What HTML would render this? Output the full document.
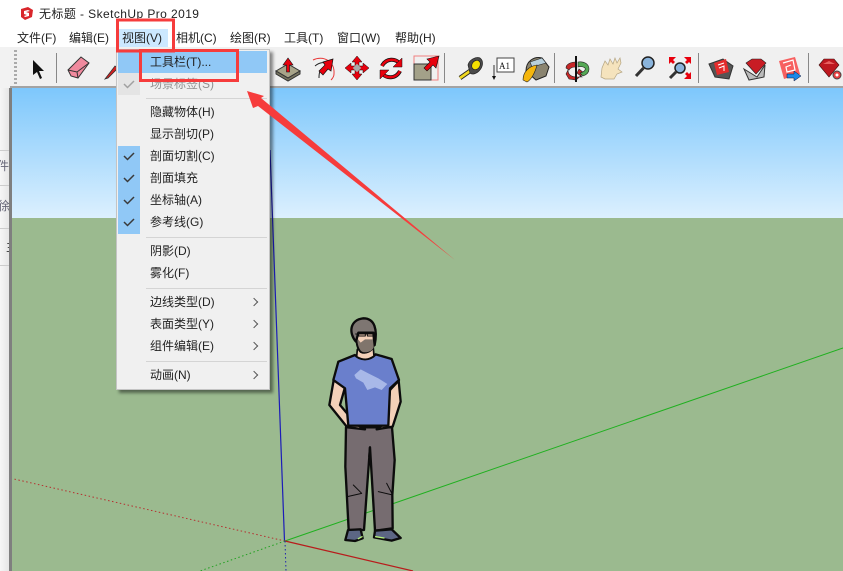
<!DOCTYPE html>
<html><head><meta charset="utf-8"><style>
*{margin:0;padding:0;box-sizing:border-box}
html,body{width:843px;height:571px;overflow:hidden;background:#fff}
body{position:relative;font-family:"Liberation Sans","Noto Sans CJK SC",sans-serif;font-size:12px;color:#222}
.a{position:absolute}
.t{position:absolute;white-space:nowrap;line-height:16px;height:16px}
.m{position:absolute;left:150px;white-space:nowrap;line-height:16px;color:#222}
.s{position:absolute;left:146px;width:121px;height:1px;background:#d4d4d4}
.ar{position:absolute;left:251px;width:6px;height:6px;border-top:1px solid #555;border-right:1px solid #555;transform:rotate(45deg)}
</style></head><body>
<div class="a" style="left:0;top:0;width:843px;height:47px;background:#fff"></div>
<svg class="a" style="left:19px;top:6px" width="15" height="15" viewBox="0 0 15 15"><path d="M2 3 9 1l5 3-1 7-7 3-4-3z" fill="#d9262b"/><path d="M5 5l4-1 2 1-4 1 3 1v3l-4 1-1-1 3-1-3-1z" fill="#fff"/></svg>
<div class="t" style="left:39px;top:6px;color:#222;letter-spacing:.42px">无标题 - SketchUp Pro 2019</div>
<div class="a" style="left:116px;top:29px;width:52px;height:19px;background:#cce8ff"></div>
<div class="t" style="left:17px;top:30px">文件(F)</div>
<div class="t" style="left:69px;top:30px">编辑(E)</div>
<div class="t" style="left:122px;top:30px">视图(V)</div>
<div class="t" style="left:176px;top:30px">相机(C)</div>
<div class="t" style="left:230px;top:30px">绘图(R)</div>
<div class="t" style="left:284px;top:30px">工具(T)</div>
<div class="t" style="left:337px;top:30px">窗口(W)</div>
<div class="t" style="left:395px;top:30px">帮助(H)</div>

<div class="a" style="left:0;top:47px;width:843px;height:39px;background:#f0f0f0"></div>
<div class="a" style="left:0;top:86px;width:843px;height:2px;background:#a3a3a3"></div>
<div class="a" style="left:0;top:47px;width:10px;height:524px;background:#f2f2f2"></div>
<div class="a" style="left:14px;top:50px;width:3px;height:34px;background:repeating-linear-gradient(#aaa 0 2px,transparent 2px 4px)"></div>
<div class="a" style="left:56px;top:53px;width:1px;height:30px;background:#888"></div>
<div class="a" style="left:444px;top:53px;width:1px;height:30px;background:#888"></div>
<div class="a" style="left:554px;top:53px;width:1px;height:30px;background:#888"></div>
<div class="a" style="left:698px;top:53px;width:1px;height:30px;background:#888"></div>
<div class="a" style="left:808px;top:53px;width:1px;height:30px;background:#888"></div>

<!-- left strip -->
<div class="a" style="left:0;top:88px;width:10px;height:483px;background:linear-gradient(90deg,#f6f6f6,#e4e4e4)"></div>
<div class="a" style="left:0;top:150px;width:10px;height:1px;background:#ccc"></div>
<div class="a" style="left:0;top:185px;width:10px;height:1px;background:#ccc"></div>
<div class="a" style="left:0;top:228px;width:10px;height:1px;background:#ccc"></div>
<div class="a" style="left:0;top:265px;width:10px;height:1px;background:#ccc"></div>
<div class="a" style="left:0;top:150px;width:10px;height:115px;overflow:hidden">
<div class="t" style="left:-3px;top:8px;color:#667">件</div>
<div class="t" style="left:-2px;top:48px;color:#667">徐</div>
<div class="t" style="left:6px;top:89px;color:#333">主</div></div>
<div class="a" style="left:9px;top:88px;width:3px;height:483px;background:#7f7f7f"></div>

<!-- viewport -->
<div class="a" style="left:12px;top:88px;width:831px;height:130px;background:linear-gradient(#7dc7fc,#dcf0fe)"></div>
<div class="a" style="left:12px;top:218px;width:831px;height:353px;background:#9bba8f"></div>
<svg class="a" style="left:0;top:0" width="843" height="571" viewBox="0 0 843 571">
<line x1="285" y1="541" x2="843" y2="348" stroke="#1fb01f" stroke-width="1"/>
<line x1="285" y1="541" x2="413" y2="571" stroke="#b81c1c" stroke-width="1.2"/>
<line x1="270" y1="150" x2="284.500" y2="541" stroke="#1c1cb8" stroke-width="1.200"/>
<line x1="285" y1="541" x2="14" y2="479" stroke="#b53030" stroke-width="1" stroke-dasharray="1.500 2.500"/>
<line x1="285" y1="541" x2="200" y2="571" stroke="#20a020" stroke-width="1" stroke-dasharray="1.500 2.500"/>
<line x1="285" y1="541" x2="286" y2="571" stroke="#2020b0" stroke-width="1" stroke-dasharray="1.500 2.500"/>
<g transform="translate(310 310) scale(.33333)" stroke="#0c0c0c" stroke-width="7" stroke-linejoin="round" stroke-linecap="round">
<path d="M108 352H246L254 450 247 555 248 655 195 662 180 412 162 660 116 660 106 470Z" fill="#766c70"/>
<path d="M72 205 58 285 112 352 165 358 138 342 90 285 105 232ZM266 212 272 275 248 350 200 358 230 335 240 240Z" fill="#f3d0b8"/>
<path d="M135 135C150 152 180 152 197 133L245 147 267 210 240 235 235 347H115L105 235 70 210 85 155Z" fill="#6a7fcc"/>
<path d="M133 195 152 178 175 190 205 205 232 222 215 240 195 232 172 240 160 218 138 205Z" fill="#a8b8e8" stroke="none"/>
<path d="M142 118 140 140C160 152 175 150 192 138L190 115Z" fill="#f3d0b8" stroke-width="5"/>
<path d="M140 68H192V100C190 125 165 132 152 125 142 115 138 95 140 68Z" fill="#f3d0b8"/>
<path d="M142 85 152 98 165 88 190 88 191 112C185 128 160 130 153 123 145 112 142 100 142 85Z" fill="#80756c" stroke="none"/>
<path d="M138 95C116 70 118 30 160 25 195 25 203 60 194 105L190 68 145 68Z" fill="#7e7672"/>
<path d="M137 72H192M146 70h20v8h-20zM172 70h20v8h-20z" fill="none" stroke-width="3"/>
<path d="M114 660 152 658 158 685 135 693 106 690ZM195 662 245 658 272 684 245 692 192 682Z" fill="#5c6684"/>
<path d="M112 560 155 550 130 525M205 545 248 555 230 520M178 412 176 440" fill="none" stroke-width="3"/>
<path d="M197 680 222 684M145 686 156 680" stroke="#b5f07a" stroke-width="4" fill="none"/>
</g>

<!-- toolbar icons -->
<path d="M33 60 33 75 37 72 40 79 42 78 39 71 44 71Z" fill="#111"/>
<g transform="translate(68 57)"><path d="M0 13 13 0 21 6 10 21 3 19Z" fill="#f08a9e" stroke="#333"/><path d="M0 13 9 15 21 6M9 15 10 21" stroke="#333" fill="none"/></g>
<path d="M105 79 115 66 118 68 108 78Z" fill="#d42020" stroke="#333" stroke-width=".8"/>
<g transform="translate(276 56)"><path d="M0 15 12 8 24 15 12 22Z" fill="#a8a489" stroke="#333"/><path d="M0 15V18L12 25 24 18V15L12 22Z" fill="#77745f" stroke="#333"/><path d="M12 2 7 9H10.500V16H13.500V9H17Z" fill="#e8000d" stroke="#111" stroke-width=".6"/></g>
<g transform="translate(311 56)"><path d="M2 4C12-1 24 5 23 18 23 20 22 22 20 24" stroke="#e83838" fill="none"/><path d="M4 10C9 6 13 6 15 8M8 22C8 16 9 14 12 13" stroke="#222" fill="none"/><path d="M22 3 12 6 14 9 8 15 12 19 17 13 20 15Z" fill="#e8000d" stroke="#111" stroke-width=".7"/></g>
<g transform="translate(345 56)"><path d="M12 0 17 6H14V10H10V6H7ZM12 24 7 18H10V14H14V18H17ZM0 12 6 7V10H10V14H6V17ZM24 12 18 17V14H14V10H18V7Z" fill="#e8000d" stroke="#111" stroke-width=".5"/><rect x="9" y="9" width="6" height="6" fill="#aaa" transform="rotate(45 12 12)"/></g>
<g transform="translate(379 56)" fill="none"><path d="M3 10C7 2 17 2 21 8" stroke="#111" stroke-width="4"/><path d="M3 10C7 2 17 2 21 8" stroke="#e8000d" stroke-width="2.500"/><path d="M23 2V11H14Z" fill="#e8000d" stroke="#111" stroke-width=".5"/><path d="M21 15C17 23 7 23 3 17" stroke="#111" stroke-width="4"/><path d="M21 15C17 23 7 23 3 17" stroke="#e8000d" stroke-width="2.500"/><path d="M1 23V14H10Z" fill="#e8000d" stroke="#111" stroke-width=".5"/></g>
<g transform="translate(414 56)"><rect x="0" y="0" width="24" height="24" fill="none" stroke="#f08080"/><rect x="0" y="8" width="17" height="16" fill="#a3a189" stroke="#333"/><path d="M25 0 13 3 16 6 10 12 13 15 19 9 22 12Z" fill="#e8000d" stroke="#111" stroke-width=".6"/></g>
<g transform="translate(457 56)"><path d="M3 22 13 15" stroke="#222" stroke-width="4.500"/><path d="M3 22 13 15" stroke="#f0d820" stroke-width="2.800"/><path d="M11 9C12 4 19 0 23 2 27 5 26 11 22 15 19 18 15 19 13 17Z" fill="#4a4a4a" stroke="#222" stroke-width=".7"/><ellipse cx="19" cy="9" rx="4" ry="5" transform="rotate(35 19 9)" fill="#f4e000" stroke="#222" stroke-width=".7"/></g>
<g transform="translate(491 56)"><rect x="6" y="2" width="17" height="14" fill="#fff" stroke="#444"/><text x="8" y="13" font-family="Liberation Serif,serif" font-size="9" fill="#111">A1</text><path d="M3 9V22" stroke="#333"/><path d="M1 20H5L3 24Z" fill="#111"/></g>
<g transform="translate(522 55)"><path d="M4 16C4 6 12 1 20 3L27 12 24 21 14 25Z" fill="#8a8470" stroke="#222"/><path d="M8 7 20 3 24 8 10 12Z" fill="#b8d0dc" stroke="#222" stroke-width=".6"/><path d="M1 25C1 17 7 11 15 10 13 18 9 25 5 27Z" fill="#f5b60d" stroke="#222" stroke-width=".6"/></g>
<g transform="translate(565 55)"><path d="M1 13C1 9 6 7 11 7V12C7 12 5 13 4 15Z" fill="#c62828" stroke="#222" stroke-width=".6"/><path d="M3 15C3 20 7 22 12 22H17L12 18 14 14 19 18 11 25 4 24 1 19Z" fill="#c62828" stroke="#222" stroke-width=".6"/><path d="M13 7C19 6 24 9 24 14 24 18 21 20 18 21L15 18C19 17 21 15 20 13 19 12 16 11 13 12Z" fill="#55a855" stroke="#222" stroke-width=".6"/><path d="M11 1V27" stroke="#111" stroke-width="2"/></g>
<path d="M601 77 602 68 605 61 608 65 610 59 613 64 615 58 617 63 620 58 621 63 618 69 622 72 617 74 614 79 605 79Z" fill="#f5e3bd" stroke="#b5a582" stroke-width=".7"/>
<g fill="none"><circle cx="648" cy="63" r="6" fill="#8ab4dc" stroke="#222" stroke-width="1.500"/><path d="M643.500 68 636 76" stroke="#333" stroke-width="3"/>
<circle cx="680" cy="68" r="5" fill="#8ab4dc" stroke="#222" stroke-width="1.500"/><path d="M676 72 670 78" stroke="#333" stroke-width="3"/></g>
<path d="M669 57 676 57 673 60 675 62 673 64 671 62 669 64ZM691 57 684 57 687 60 685 62 687 64 689 62 691 64ZM691 79 684 79 687 76 685 74 687 72 689 74 691 72Z" fill="#e8000d"/>
<g transform="translate(709 56)"><path d="M0 8 14 3 24 10 20 23 6 21Z" fill="#555" stroke="#333"/><path d="M5 7 17 3 20 16 8 19Z" fill="#e42c2c"/><path d="M9 9 15 7M10 12 15 10V15" stroke="#fff" fill="none"/></g>
<g transform="translate(743 57)"><path d="M1 12 14 20 22 8 21 20 6 23Z" fill="#bbb" stroke="#333"/><path d="M3 6 9 2H18L23 6 13 17Z" fill="#c81c24" stroke="#222" stroke-width=".6"/></g>
<g transform="translate(778 57)"><path d="M1 4 17 0 22 17 6 22Z" fill="#f76060"/><path d="M5 6 15 3 17 13 9 15 8 10 13 8" stroke="#fff" fill="none" stroke-width="1.200"/><path d="M9 17H16V14L23 19 16 24V21H9Z" fill="#1a88e8" stroke="#113" stroke-width=".5"/></g>
<g transform="translate(819 58)"><path d="M0 7 5 1H15L20 7 10 19Z" fill="#be1820" stroke="#411" stroke-width=".6"/><path d="M4 6H16L10 3Z" fill="#e86060"/><circle cx="18" cy="17" r="4" fill="#e84040" stroke="#444"/><circle cx="18" cy="17" r="1.500" fill="#fff"/></g>
</svg>

<!-- menu -->
<div class="a" style="left:116px;top:49px;width:154px;height:341px;background:#f0f0f0;border:1px solid #c4c4c4;box-shadow:3px 3px 3px rgba(0,0,0,.45)"></div>
<div class="a" style="left:118px;top:51px;width:149px;height:22px;background:#90c8f6"></div>
<div class="a" style="left:118px;top:73px;width:22px;height:22px;background:#e4e4e4"></div>
<div class="a" style="left:118px;top:146px;width:22px;height:88px;background:#90c8f6"></div>
<svg class="a" style="left:118px;top:73px" width="22" height="161" fill="none" stroke-width="1.500"><path d="M6 11 9.500 14.500 16 8" stroke="#a0a0a0"/><path d="M6 83 9.500 86.500 16 80M6 105 9.500 108.500 16 102M6 127 9.500 130.500 16 124M6 149 9.500 152.500 16 146" stroke="#3a3a3a"/></svg>
<div class="m" style="top:54px">工具栏(T)...</div>
<div class="m" style="top:76px;color:#909090">场景标签(S)</div>
<div class="s" style="top:98px"></div>
<div class="m" style="top:104px">隐藏物体(H)</div>
<div class="m" style="top:126px">显示剖切(P)</div>
<div class="m" style="top:148px">剖面切割(C)</div>
<div class="m" style="top:170px">剖面填充</div>
<div class="m" style="top:192px">坐标轴(A)</div>
<div class="m" style="top:214px">参考线(G)</div>
<div class="s" style="top:237px"></div>
<div class="m" style="top:243px">阴影(D)</div>
<div class="m" style="top:265px">雾化(F)</div>
<div class="s" style="top:288px"></div>
<div class="m" style="top:294px">边线类型(D)</div><div class="ar" style="top:299px"></div>
<div class="m" style="top:316px">表面类型(Y)</div><div class="ar" style="top:321px"></div>
<div class="m" style="top:338px">组件编辑(E)</div><div class="ar" style="top:343px"></div>
<div class="s" style="top:361px"></div>
<div class="m" style="top:367px">动画(N)</div><div class="ar" style="top:372px"></div>

<!-- annotations -->
<svg class="a" style="left:0;top:0" width="843" height="571">
<rect x="117.500" y="20" width="56" height="31" fill="none" stroke="#f63c3c" stroke-width="3"/>
<rect x="140.500" y="50.500" width="97" height="30" fill="none" stroke="#f63c3c" stroke-width="3"/>
<polygon points="247,91 264,96 261,98 455,260 258,106 253,108" fill="#f63c3c"/>
</svg>
</body></html>
